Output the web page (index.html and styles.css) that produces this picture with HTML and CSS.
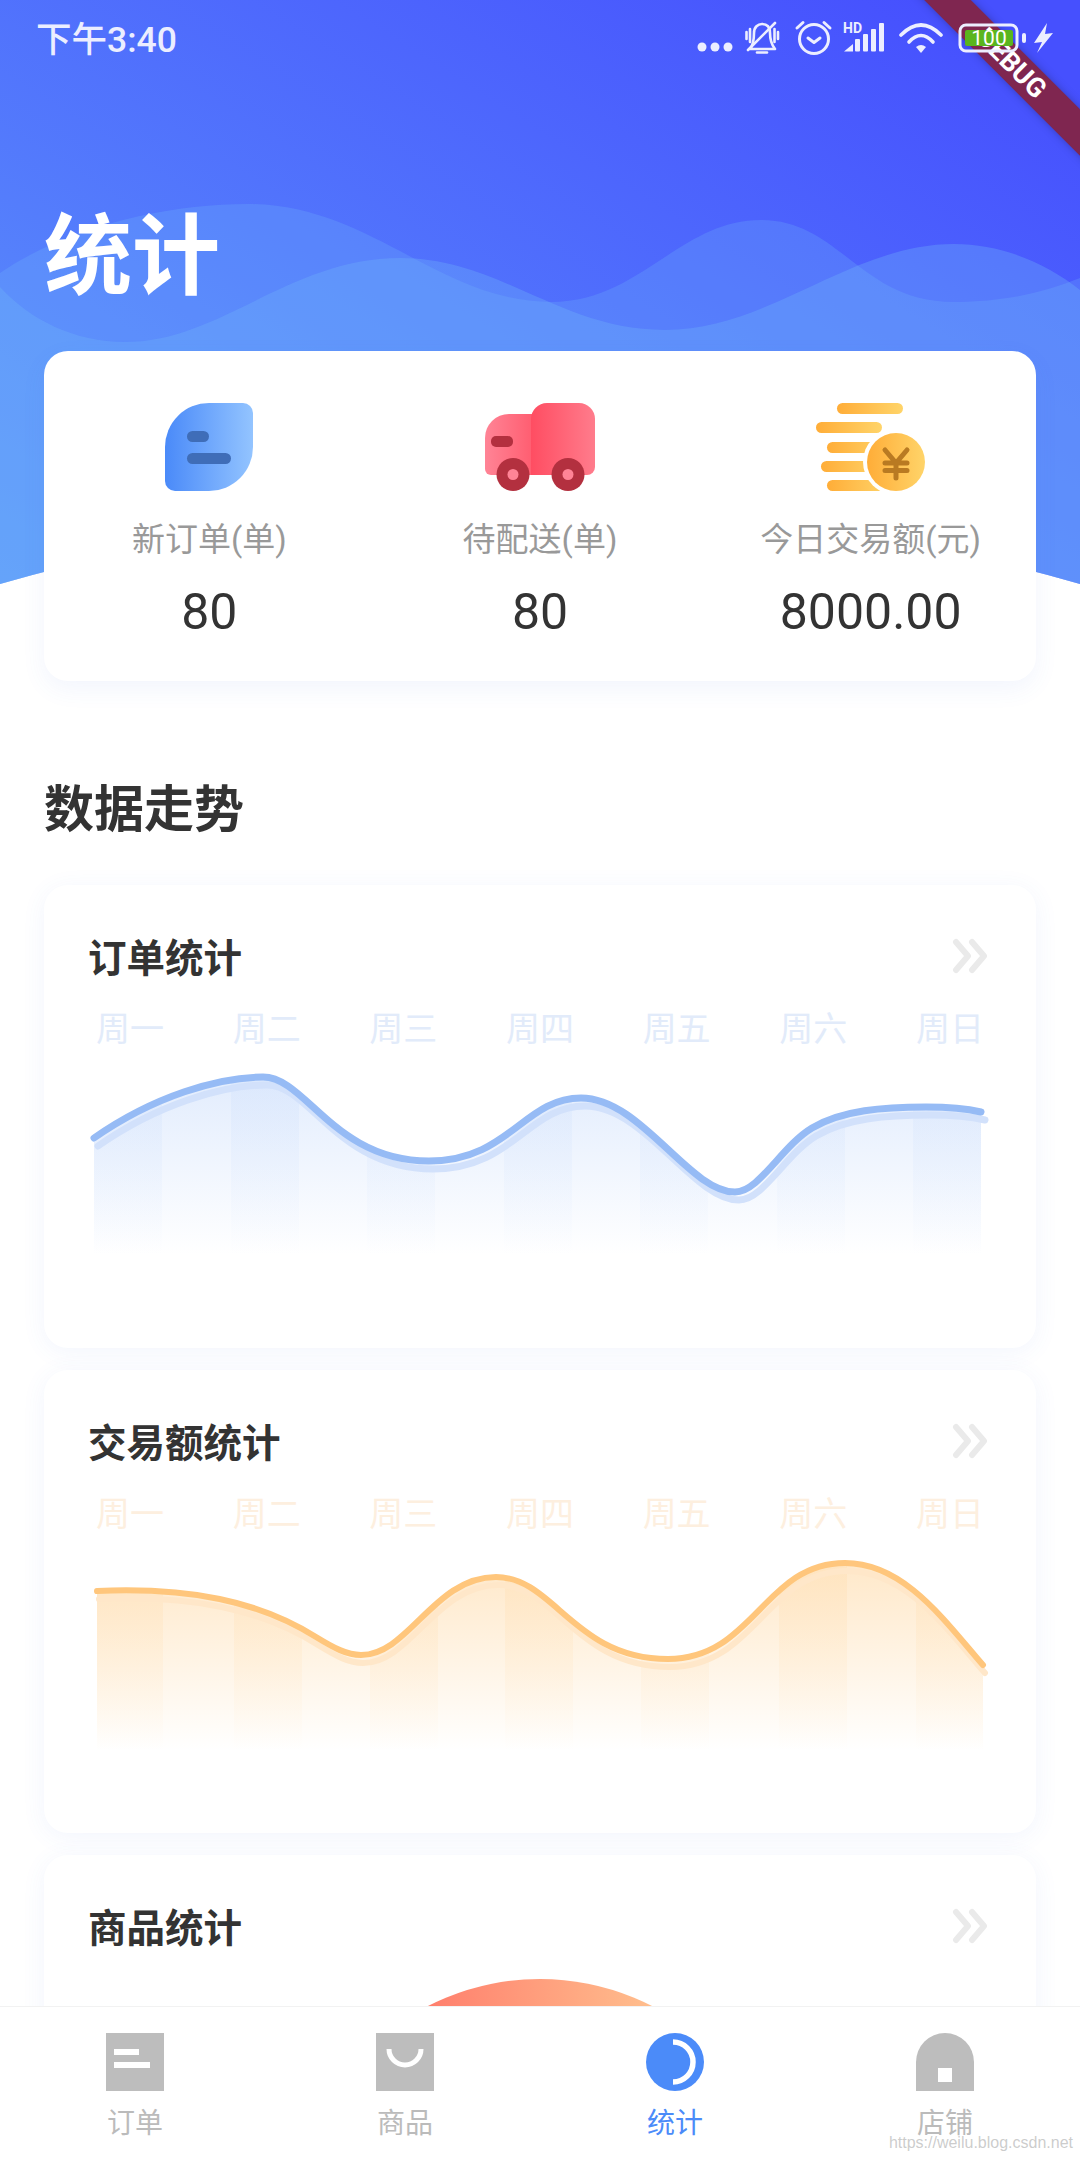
FILE: index.html
```html
<!DOCTYPE html>
<html lang="zh-CN">

<head>
    <meta charset="UTF-8" />
    <meta name="viewport" content="width=device-width, initial-scale=1" />
    <title>统计</title>
    <link rel="stylesheet" href="styles.css">
</head>

<body>
    <div class="page">
        <main class="content">

            <!-- Kopfbereich mit Wellen -->
            <section class="hero">
                <svg class="hero-bg" viewBox="0 0 1080 584" width="1080" height="584">
                    <defs>
                        <linearGradient id="heroGrad" x1="0" y1="1" x2="1" y2="0.15">
                            <stop offset="0" stop-color="#5b93fb" />
                            <stop offset="1" stop-color="#4650fe" />
                        </linearGradient>
                        <clipPath id="heroClip">
                            <path d="M0 0H1080V584Q540 430 0 584Z" />
                        </clipPath>
                    </defs>
                    <g clip-path="url(#heroClip)">
                        <rect width="1080" height="584" fill="url(#heroGrad)" />
                        <path d="M0 273C70 225 170 204 248 204C370 204 440 302 551 302C640 302 680 220 761 220C840 220 860 302 954 302C1010 302 1050 290 1080 278V584H0Z" fill="#6fb4fa" fill-opacity="0.26" />
                        <path d="M0 287C30 320 75 342 125 342C220 342 290 258 400 258C500 258 560 330 665 330C770 330 850 244 954 244C1000 244 1045 262 1080 290V584H0Z" fill="#6fb4fa" fill-opacity="0.34" />
                    </g>
                </svg>
                <div class="hero-inner">
                    <div class="status-bar">
                        <span class="status-time">下午3:40</span>
                        <svg class="status-icons" viewBox="696 16 362 44" width="362" height="44">
                            <circle cx="702" cy="47" r="4.5" fill="#eceeff" />
                            <circle cx="715" cy="47" r="4.5" fill="#eceeff" />
                            <circle cx="728" cy="47" r="4.5" fill="#eceeff" />
                            <g fill="none" stroke="#eceeff" stroke-width="2.6" stroke-linecap="round" stroke-linejoin="round">
                                <path d="M750 49C754 44 754 38 754 33C754 27 758 24 762 24C767 24 770 27 770 33C770 39 771 44 775 49Z" />
                                <path d="M748 50L775 23" />
                                <path d="M757 52.500H767" />
                                <path d="M746.500 32V39M750 29V42M774.500 29V42M778 32V39" />
                                <circle cx="814" cy="39" r="14.500" stroke-width="3" />
                                <path d="M797 28L803 22.500M824 22.500L830 28" stroke-width="3" />
                                <path d="M808 38L814 42.500L820 38" stroke-width="3" />
                                <path d="M901 35Q921 15 941 35" stroke-width="3.600" />
                                <path d="M909 42Q921 29 933 42" stroke-width="3.600" />
                            </g>
                            <text class="status-hd" x="843" y="32.500">HD</text>
                            <path d="M844 51.500L853 44V51.500Z" fill="#eceeff" />
                            <rect x="855" y="39" width="5" height="12.500" rx="1" fill="#eceeff" />
                            <rect x="863" y="34" width="5" height="17.500" rx="1" fill="#eceeff" />
                            <rect x="871" y="29" width="5" height="22.500" rx="1" fill="#eceeff" />
                            <rect x="879" y="23" width="5" height="28.500" rx="1" fill="#eceeff" />
                            <path d="M916 47L921 53L926 47Q921 43 916 47Z" fill="#eceeff" />
                            <rect x="960" y="25" width="57" height="26" rx="6" fill="none" stroke="#eceeff" stroke-width="3" />
                            <rect x="965" y="30" width="48" height="16" rx="2" fill="#5ab51e" />
                            <rect x="1022" y="33" width="4" height="10" rx="2" fill="#eceeff" />
                            <text class="status-battery" x="989" y="45">100</text>
                            <path d="M1047 23L1034 43L1042 42L1037 53L1053 33L1045 34Z" fill="#eceeff" />
                        </svg>
                    </div>
                    <h1 class="hero-title">统计</h1>
                </div>
            </section>

            <section class="stats-card">
                <div class="stat">
                    <svg class="stat-icon" viewBox="0 0 88 88" width="88" height="88">
                        <defs>
                            <linearGradient id="leafGrad" x1="0" y1="0" x2="1" y2="0">
                                <stop offset="0" stop-color="#4a8af9" />
                                <stop offset="1" stop-color="#93c4ff" />
                            </linearGradient>
                        </defs>
                        <path d="M44 0H78A10 10 0 0 1 88 10V44A44 44 0 0 1 44 88H10A10 10 0 0 1 0 78V44A44 44 0 0 1 44 0Z" fill="url(#leafGrad)" />
                        <rect x="22" y="28" width="22" height="11" rx="5.500" fill="#3f6db8" />
                        <rect x="22" y="50" width="44" height="11" rx="5.500" fill="#3f6db8" />
                    </svg>
                    <div class="stat-label">新订单(单)</div>
                    <div class="stat-value">80</div>
                </div>
                <div class="stat">
                    <svg class="stat-icon" viewBox="0 0 110 88" width="110" height="88">
                        <defs>
                            <linearGradient id="cabGrad" x1="0" y1="0" x2="1" y2="0">
                                <stop offset="0" stop-color="#ff8496" />
                                <stop offset="1" stop-color="#ff5d70" />
                            </linearGradient>
                            <linearGradient id="boxGrad" x1="0" y1="0" x2="1" y2="0">
                                <stop offset="0" stop-color="#ff4d62" />
                                <stop offset="1" stop-color="#ff7c8c" />
                            </linearGradient>
                        </defs>
                        <path d="M24 11H48V72H6A6 6 0 0 1 0 66V35A24 24 0 0 1 24 11Z" fill="url(#cabGrad)" />
                        <path d="M46 16A16 16 0 0 1 62 0H94A16 16 0 0 1 110 16V64A8 8 0 0 1 102 72H46Z" fill="url(#boxGrad)" />
                        <rect x="6" y="33" width="22" height="11" rx="5" fill="#b3303f" />
                        <circle cx="28" cy="71.500" r="16.500" fill="#b3303f" />
                        <circle cx="28" cy="71.500" r="5.500" fill="#ff8496" />
                        <circle cx="83" cy="71.500" r="16.500" fill="#b3303f" />
                        <circle cx="83" cy="71.500" r="5.500" fill="#ff8496" />
                    </svg>
                    <div class="stat-label">待配送(单)</div>
                    <div class="stat-value">80</div>
                </div>
                <div class="stat">
                    <svg class="stat-icon" viewBox="0 0 110 88" width="110" height="88">
                        <defs>
                            <linearGradient id="coinGrad" x1="0" y1="0" x2="1" y2="0">
                                <stop offset="0" stop-color="#ffad38" />
                                <stop offset="1" stop-color="#ffd469" />
                            </linearGradient>
                        </defs>
                        <rect x="21" y="0" width="66" height="11" rx="5.500" fill="url(#coinGrad)" />
                        <rect x="0" y="19" width="66" height="11" rx="5.500" fill="url(#coinGrad)" />
                        <rect x="11" y="39" width="62" height="11" rx="5.500" fill="url(#coinGrad)" />
                        <rect x="5" y="58" width="62" height="11" rx="5.500" fill="url(#coinGrad)" />
                        <rect x="11" y="77" width="62" height="11" rx="5.500" fill="url(#coinGrad)" />
                        <circle cx="80" cy="59" r="33" fill="#fff" />
                        <circle cx="80" cy="59" r="29" fill="url(#coinGrad)" />
                        <path d="M69 47L80 60L91 47M80 60V75M69 60H91M69 67.500H91" fill="none" stroke="#b97a22" stroke-width="5" stroke-linecap="round" stroke-linejoin="round" />
                    </svg>
                    <div class="stat-label">今日交易额(元)</div>
                    <div class="stat-value">8000.00</div>
                </div>
            </section>

            <h2 class="section-title">数据走势</h2>

            <section class="chart-card">
                <div class="chart-head">
                    <h3 class="chart-title">订单统计</h3>
                    <svg class="chevrons" viewBox="0 0 36 36" width="36" height="36">
                        <path d="M4 4L16 18L4 32M20 4L32 18L20 32" fill="none" stroke="#eaeaea" stroke-width="6" stroke-linecap="round" stroke-linejoin="round" />
                    </svg>
                </div>
                <div class="weekdays weekdays-blue">
                    <span>周一</span><span>周二</span><span>周三</span><span>周四</span><span>周五</span><span>周六</span><span>周日</span>
                </div>
                <svg class="chart" viewBox="0 0 992 240" width="992" height="240">
                    <defs>
                        <path id="blueLine" d="M50 88C110 46 175 27 219 27C262 27 290 111 385 111C465 111 480 48 537 48C597 48 645 142 691 142C715 142 738 96 768 78C798 60 840 57 882 57C905 57 920 58 937 62" />
                        <linearGradient id="blueFill" gradientUnits="userSpaceOnUse" x1="0" y1="27" x2="0" y2="205">
                            <stop offset="0" stop-color="#cfe0fc" />
                            <stop offset="1" stop-color="#cfe0fc" stop-opacity="0" />
                        </linearGradient>
                        <clipPath id="blueArea">
                            <path d="M50 88C110 46 175 27 219 27C262 27 290 111 385 111C465 111 480 48 537 48C597 48 645 142 691 142C715 142 738 96 768 78C798 60 840 57 882 57C905 57 920 58 937 62V240H50Z" />
                        </clipPath>
                    </defs>
                    <g clip-path="url(#blueArea)" fill="url(#blueFill)">
                        <rect x="50" y="0" width="887" height="240" fill-opacity="0.6" />
                        <rect x="50" y="0" width="68" height="240" fill-opacity="0.35" />
                        <rect x="187" y="0" width="68" height="240" fill-opacity="0.35" />
                        <rect x="323" y="0" width="68" height="240" fill-opacity="0.35" />
                        <rect x="460" y="0" width="68" height="240" fill-opacity="0.35" />
                        <rect x="596" y="0" width="68" height="240" fill-opacity="0.35" />
                        <rect x="733" y="0" width="68" height="240" fill-opacity="0.35" />
                        <rect x="869" y="0" width="68" height="240" fill-opacity="0.35" />
                    </g>
                    <use href="#blueLine" class="line line-shadow-blue" transform="translate(4 8)" />
                    <use href="#blueLine" class="line line-blue" />
                </svg>
            </section>

            <section class="chart-card">
                <div class="chart-head">
                    <h3 class="chart-title">交易额统计</h3>
                    <svg class="chevrons" viewBox="0 0 36 36" width="36" height="36">
                        <path d="M4 4L16 18L4 32M20 4L32 18L20 32" fill="none" stroke="#eaeaea" stroke-width="6" stroke-linecap="round" stroke-linejoin="round" />
                    </svg>
                </div>
                <div class="weekdays weekdays-orange">
                    <span>周一</span><span>周二</span><span>周三</span><span>周四</span><span>周五</span><span>周六</span><span>周日</span>
                </div>
                <svg class="chart" viewBox="0 0 992 240" width="992" height="240">
                    <defs>
                        <path id="orangeLine" d="M53 56C145 52 215 66 272 102C290 113 303 120 317 120C365 120 390 42 452 42C510 42 530 124 624 124C710 124 720 28 801 28C860 28 900 85 939 130" />
                        <linearGradient id="orangeFill" gradientUnits="userSpaceOnUse" x1="0" y1="28" x2="0" y2="216">
                            <stop offset="0" stop-color="#ffdcac" />
                            <stop offset="1" stop-color="#ffdcac" stop-opacity="0" />
                        </linearGradient>
                        <clipPath id="orangeArea">
                            <path d="M53 56C145 52 215 66 272 102C290 113 303 120 317 120C365 120 390 42 452 42C510 42 530 124 624 124C710 124 720 28 801 28C860 28 900 85 939 130V240H53Z" />
                        </clipPath>
                    </defs>
                    <g clip-path="url(#orangeArea)" fill="url(#orangeFill)">
                        <rect x="53" y="0" width="886" height="240" fill-opacity="0.65" />
                        <rect x="53" y="0" width="66" height="240" fill-opacity="0.35" />
                        <rect x="190" y="0" width="68" height="240" fill-opacity="0.35" />
                        <rect x="326" y="0" width="68" height="240" fill-opacity="0.35" />
                        <rect x="461" y="0" width="68" height="240" fill-opacity="0.35" />
                        <rect x="597" y="0" width="68" height="240" fill-opacity="0.35" />
                        <rect x="735" y="0" width="68" height="240" fill-opacity="0.35" />
                        <rect x="872" y="0" width="67" height="240" fill-opacity="0.35" />
                    </g>
                    <use href="#orangeLine" class="line line-shadow-orange" transform="translate(2 8)" />
                    <use href="#orangeLine" class="line line-orange" />
                </svg>
            </section>

            <section class="chart-card">
                <div class="chart-head">
                    <h3 class="chart-title">商品统计</h3>
                    <svg class="chevrons" viewBox="0 0 36 36" width="36" height="36">
                        <path d="M4 4L16 18L4 32M20 4L32 18L20 32" fill="none" stroke="#eaeaea" stroke-width="6" stroke-linecap="round" stroke-linejoin="round" />
                    </svg>
                </div>
                <div class="pie"></div>
            </section>
        </main>

        <nav class="tabbar">
            <div class="tab">
                <svg class="tab-icon" viewBox="0 0 58 58" width="58" height="58">
                    <rect width="58" height="58" fill="#bdbdbd" />
                    <rect x="8" y="16" width="25" height="6" fill="#fff" />
                    <rect x="8" y="29" width="36" height="6" fill="#fff" />
                </svg>
                <span class="tab-label">订单</span>
            </div>
            <div class="tab">
                <svg class="tab-icon" viewBox="0 0 58 58" width="58" height="58">
                    <rect width="58" height="58" fill="#bdbdbd" />
                    <path d="M13 16A16 16 0 0 0 45 16" fill="none" stroke="#fff" stroke-width="5" />
                </svg>
                <span class="tab-label">商品</span>
            </div>
            <div class="tab tab-active">
                <svg class="tab-icon" viewBox="0 0 58 58" width="58" height="58">
                    <circle cx="29" cy="29" r="29" fill="#4b8bf9" />
                    <path d="M27 9A20 20 0 0 1 27 49" fill="none" stroke="#fff" stroke-width="5.500" />
                </svg>
                <span class="tab-label">统计</span>
            </div>
            <div class="tab">
                <svg class="tab-icon" viewBox="0 0 58 58" width="58" height="58">
                    <path d="M0 29A29 29 0 0 1 58 29V58H0Z" fill="#bdbdbd" />
                    <rect x="22" y="35" width="14" height="14" fill="#fff" />
                </svg>
                <span class="tab-label">店铺</span>
            </div>
        </nav>

        <div class="debug-ribbon">DEBUG</div>
        <div class="watermark">https://weilu.blog.csdn.net</div>
    </div>
</body>

</html>
```

FILE: styles.css
```css
html,
body {
    margin: 0;
    background: #fff;
}

body {
    font-family: Roboto, "Noto Sans CJK SC", sans-serif;
    color: #333;
}

.page {
    position: relative;
    width: 1080px;
    height: 2160px;
    overflow: hidden;
    display: flex;
    flex-direction: column;
}

.content {
    flex: 1;
    min-height: 0;
    overflow: hidden;
}

/* Kopfbereich: Hintergrund und Inhalt im selben Grid-Feld */
.hero {
    display: grid;
    height: 584px;
}

.hero-bg,
.hero-inner {
    grid-area: 1 / 1;
}

.hero-bg {
    display: block;
}

.hero-inner {
    position: relative;
    z-index: 3;
}

.status-bar {
    display: flex;
    justify-content: space-between;
    align-items: center;
    padding: 16px 22px 0 36px;
    height: 44px;
}

.status-time {
    padding-top: 3px;
    font-size: 35.500px;
    font-weight: 500;
    line-height: 44px;
    color: #eceeff;
}

.status-icons {
    display: block;
}

.status-hd {
    font-size: 14px;
    font-weight: 700;
    fill: #eceeff;
}

.status-battery {
    font-size: 21px;
    fill: #fff;
    text-anchor: middle;
}

.hero-title {
    margin: 152px 0 0 44px;
    font-size: 88px;
    line-height: 90px;
    font-weight: 700;
    color: #fff;
}

/* Karte mit den Tageswerten */
.stats-card {
    position: relative;
    z-index: 1;
    display: grid;
    grid-template-columns: repeat(3, 1fr);
    margin: -233px 44px 0;
    height: 330px;
    box-sizing: border-box;
    padding-top: 52px;
    background: #fff;
    border-radius: 24px;
    box-shadow: 0 8px 24px rgba(70, 110, 220, 0.07);
}

.stat {
    display: flex;
    flex-direction: column;
    align-items: center;
}

.stat-icon {
    display: block;
}

.stat-label {
    margin-top: 27px;
    font-size: 33px;
    line-height: 44px;
    color: #999;
}

.stat-value {
    margin-top: 22px;
    font-size: 50px;
    line-height: 56px;
    color: #333;
}

.section-title {
    margin: 97px 44px 43px;
    font-size: 50px;
    line-height: 64px;
    font-weight: 700;
    color: #333;
}

/* Diagrammkarten */
.chart-card {
    height: 463px;
    box-sizing: border-box;
    margin: 0 44px 22px;
    padding-top: 46px;
    background: #fff;
    border-radius: 24px;
    box-shadow: 0 4px 24px rgba(70, 110, 220, 0.07);
    overflow: hidden;
}

.chart-head {
    display: flex;
    justify-content: space-between;
    align-items: center;
    padding: 0 48px 0 44px;
    height: 56px;
}

.chart-title {
    margin: 0;
    font-size: 38.500px;
    line-height: 56px;
    font-weight: 700;
    color: #333;
}

.chevrons {
    display: block;
    margin-top: -6px;
}

.weekdays {
    display: flex;
    justify-content: space-between;
    margin-top: 20px;
    padding: 0 52px;
    font-size: 34px;
    line-height: 44px;
}

.weekdays-blue {
    color: #e2ebfa;
}

.weekdays-orange {
    color: #fdefdf;
}

.chart {
    display: block;
    margin-top: -1px;
}

.line {
    fill: none;
    stroke-width: 6;
    stroke-linecap: round;
    stroke-linejoin: round;
}

.line-blue {
    stroke: #96bbf5;
    stroke-width: 7;
}

.line-shadow-blue {
    stroke: #d2e1fb;
    stroke-width: 7;
}

.line-orange {
    stroke: #ffc67c;
}

.line-shadow-orange {
    stroke: #ffe7c9;
}

.pie {
    width: 492px;
    height: 492px;
    margin: 22px auto 0;
    border-radius: 50%;
    background: linear-gradient(90deg, #ff7d6c 26%, #ffc08e 74%);
}

/* Untere Navigation */
.tabbar {
    position: relative;
    z-index: 2;
    flex: none;
    height: 154px;
    box-sizing: border-box;
    display: grid;
    grid-template-columns: repeat(4, 1fr);
    padding-top: 26px;
    background: #fff;
    border-top: 1px solid #f2f2f2;
}

.tab {
    display: flex;
    flex-direction: column;
    align-items: center;
}

.tab-icon {
    display: block;
}

.tab-label {
    margin-top: 13px;
    font-size: 28px;
    line-height: 40px;
    color: #bbb;
}

.tab-active .tab-label {
    color: #4b8bf9;
}

/* Debug-Banner oben rechts */
.debug-ribbon {
    position: absolute;
    z-index: 2;
    left: 861px;
    top: 47px;
    width: 300px;
    height: 33px;
    transform: rotate(45deg);
    background: #7f2650;
    box-shadow: 0 0 8px rgba(0, 0, 0, 0.25);
    color: #fff;
    font-size: 27px;
    font-weight: 700;
    line-height: 33px;
    text-align: center;
}

.watermark {
    position: absolute;
    z-index: 4;
    right: 7px;
    bottom: 8px;
    font-family: "Liberation Sans", sans-serif;
    font-size: 16px;
    color: rgba(170, 170, 170, 0.6);
}
```
